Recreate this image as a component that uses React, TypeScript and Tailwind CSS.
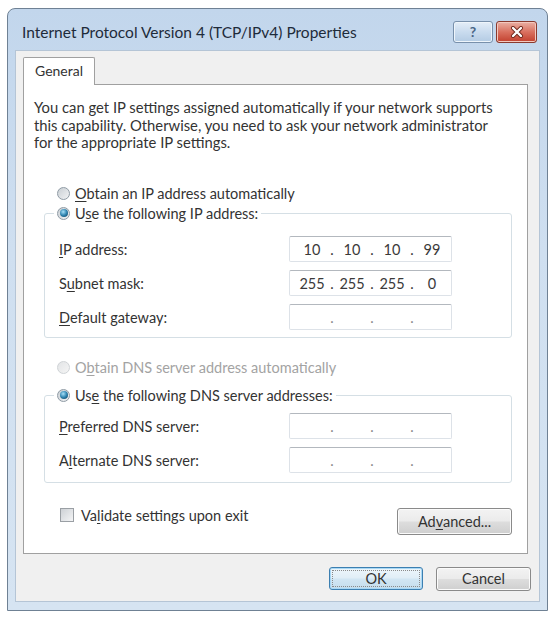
import { Fragment, ReactNode } from 'react';

const U = ({ children }: { children: ReactNode }) => (
  <u className="underline decoration-1 underline-offset-[2px]">{children}</u>
);

function Radio({ checked, disabled }: { checked?: boolean; disabled?: boolean }) {
  return (
    <span
      className={`flex h-[13px] w-[13px] shrink-0 items-center justify-center rounded-full border ${
        disabled
          ? 'border-[#cfd3d6] bg-[linear-gradient(135deg,#e2e4e6,#f5f5f5)]'
          : 'border-[#8f9ba5] bg-[linear-gradient(135deg,#c9cfd4,#f2f3f4)]'
      }`}
    >
      {checked && (
        <span className="h-[8px] w-[8px] rounded-full bg-[radial-gradient(circle_at_40%_35%,#a6e0f8,#2f84b0_50%,#0e3a57)]" />
      )}
    </span>
  );
}

function IpBox({ values }: { values?: string[] }) {
  const v = values ?? ['', '', '', ''];
  return (
    <div className="flex h-[26px] w-[163px] items-center rounded-[2px] border border-[#dde2e8] border-t-[#b3b8be] bg-white pl-[5px] pt-[1px] text-[14.5px] text-[#3a3a3a]">
      {v.map((o, i) => (
        <Fragment key={i}>
          {i > 0 && (
            <span className={`w-[6px] text-center ${values ? 'text-[#3a3a3a]' : 'text-[#8a8a8a]'}`}>.</span>
          )}
          <span className="w-[34px] text-center">{o}</span>
        </Fragment>
      ))}
    </div>
  );
}

function Field({ label, values }: { label: ReactNode; values?: string[] }) {
  return (
    <div className="flex h-[26px] items-center">
      <span className="w-[230px] pt-[2px]">{label}</span>
      <IpBox values={values} />
    </div>
  );
}

export default function App() {
  return (
    <div className="h-[618px] w-[550px] overflow-hidden bg-white pl-[7px] pt-[8px] font-['Lato',sans-serif] text-[14.5px] text-[#333]">
      {/* Window frame */}
      <div className="flex h-[603px] w-[541px] flex-col rounded-t-[8px] border border-[#6f8194] bg-[linear-gradient(#c2d6ec,#cfdff0_40%,#d6e4f2)]">
        {/* Title bar */}
        <div className="flex h-[41px] shrink-0 items-start">
          <span className="ml-[14px] mt-[14px] text-[15.5px] leading-[18px] text-[#1e2b3a]">
            Internet Protocol Version 4 (TCP/IPv4) Properties
          </span>
          <div className="ml-auto mr-[10px] mt-[12px] flex gap-[3px]">
            <div className="flex h-[22px] w-[40px] items-center justify-center rounded-[3px] border border-[#7890ab] bg-[linear-gradient(#e4eef8,#c9dbee_50%,#b3cbe3)] shadow-[inset_0_0_0_1px_#eef5fb]">
              <span className="text-[14px] font-bold leading-none text-[#4a6686]">?</span>
            </div>
            <div className="flex h-[22px] w-[41px] items-center justify-center rounded-[3px] border border-[#8a3a2e] bg-[linear-gradient(#eab0a4,#d9705f_50%,#c2402e)] shadow-[inset_0_0_0_1px_#f3c8be]">
              <svg width="14" height="12" viewBox="0 0 14 12">
                <path d="M3 2 L11 10 M11 2 L3 10" stroke="#6a2418" strokeWidth="4" strokeLinecap="round" />
                <path d="M3 2 L11 10 M11 2 L3 10" stroke="#ffffff" strokeWidth="2.4" strokeLinecap="round" />
              </svg>
            </div>
          </div>
        </div>

        {/* Dialog body */}
        <div className="flex-1 px-[7px] pb-[8px]">
          <div className="flex h-[552px] flex-col border border-[#b5c5d6] bg-[#f0f0f0] pl-[7px] pt-[6px]">
            {/* Tab */}
            <div className="relative z-10 -mb-[1px] flex h-[28px] w-[72px] items-center justify-center rounded-t-[2px] border border-b-0 border-[#a0a0a0] bg-white pb-[2px] text-[14px] text-[#333]">
              General
            </div>

            {/* Tab panel */}
            <div className="flex h-[470px] w-[505px] flex-col border border-[#a0a0a0] bg-white">
              <p className="whitespace-nowrap px-[10px] pt-[14px] text-[14.8px] leading-[17.5px]">
                You can get IP settings assigned automatically if your network supports
                <br />
                this capability. Otherwise, you need to ask your network administrator
                <br />
                for the appropriate IP settings.
              </p>

              <div className="ml-[33px] mt-[32.5px] flex h-[18px] items-center gap-[5px]">
                <Radio />
                <span className="pt-[1px]">
                  <U>O</U>btain an IP address automatically
                </span>
              </div>

              <fieldset className="ml-[20px] mr-[15px] mt-[2px] rounded-[3px] border border-[#d5dfe5] px-[14px] pb-[7px]">
                <legend className="-ml-[5px] px-[3px]">
                  <span className="flex h-[18px] items-center gap-[5px]">
                    <Radio checked />
                    <span className="pt-[1px]">
                      U<U>s</U>e the following IP address:
                    </span>
                  </span>
                </legend>
                <div className="mt-[14px] flex flex-col gap-[8px]">
                  <Field label={<><U>I</U>P address:</>} values={['10', '10', '10', '99']} />
                  <Field label={<>S<U>u</U>bnet mask:</>} values={['255', '255', '255', '0']} />
                  <Field label={<><U>D</U>efault gateway:</>} />
                </div>
              </fieldset>

              <div className="ml-[33px] mt-[20px] flex h-[18px] items-center gap-[5px] text-[#a3a3a3]">
                <Radio disabled />
                <span className="pt-[1px]">
                  O<U>b</U>tain DNS server address automatically
                </span>
              </div>

              <fieldset className="ml-[20px] mr-[15px] mt-[10px] rounded-[3px] border border-[#d5dfe5] px-[14px] pb-[9px]">
                <legend className="-ml-[5px] px-[3px]">
                  <span className="flex h-[18px] items-center gap-[5px]">
                    <Radio checked />
                    <span className="pt-[1px]">
                      Us<U>e</U> the following DNS server addresses:
                    </span>
                  </span>
                </legend>
                <div className="mt-[9px] flex flex-col gap-[8px]">
                  <Field label={<><U>P</U>referred DNS server:</>} />
                  <Field label={<>A<U>l</U>ternate DNS server:</>} />
                </div>
              </fieldset>

              <div className="ml-[20px] mr-[15px] mt-[23px] flex items-start justify-between">
                <div className="flex h-[18px] items-center gap-[7px] pl-[16px]">
                  <span className="h-[14px] w-[14px] border border-[#9a9fa4] bg-[linear-gradient(135deg,#cdd1d5,#f4f5f6)]" />
                  <span className="pt-[1px]">
                    Va<U>l</U>idate settings upon exit
                  </span>
                </div>
                <button className="mt-[2px] h-[27px] w-[115px] rounded-[3px] border border-[#8a8a8a] bg-[linear-gradient(#f3f3f3,#ebebeb_48%,#dddddd_52%,#cfcfcf)] text-[14.5px] text-[#333] shadow-[inset_0_0_0_1px_#fbfbfb]">
                  Ad<U>v</U>anced...
                </button>
              </div>
            </div>

            {/* Bottom buttons */}
            <div className="mt-[13px] flex justify-end gap-[13px] pr-[8px]">
              <button className="h-[23px] w-[94px] rounded-[3px] border border-[#3c7fb1] bg-[linear-gradient(#eef6fb,#e0eef7_48%,#d2e6f3_52%,#c4dded)] text-[14.5px] text-[#333] shadow-[inset_0_0_0_1px_#a9d8f5] outline-1 -outline-offset-4 outline-dotted outline-[#8a8a8a]">
                OK
              </button>
              <button className="h-[24px] w-[95px] rounded-[3px] border border-[#8a8a8a] bg-[linear-gradient(#f3f3f3,#ebebeb_48%,#dddddd_52%,#cfcfcf)] text-[14.5px] text-[#333] shadow-[inset_0_0_0_1px_#fbfbfb]">
                Cancel
              </button>
            </div>
          </div>
        </div>
      </div>
    </div>
  );
}
